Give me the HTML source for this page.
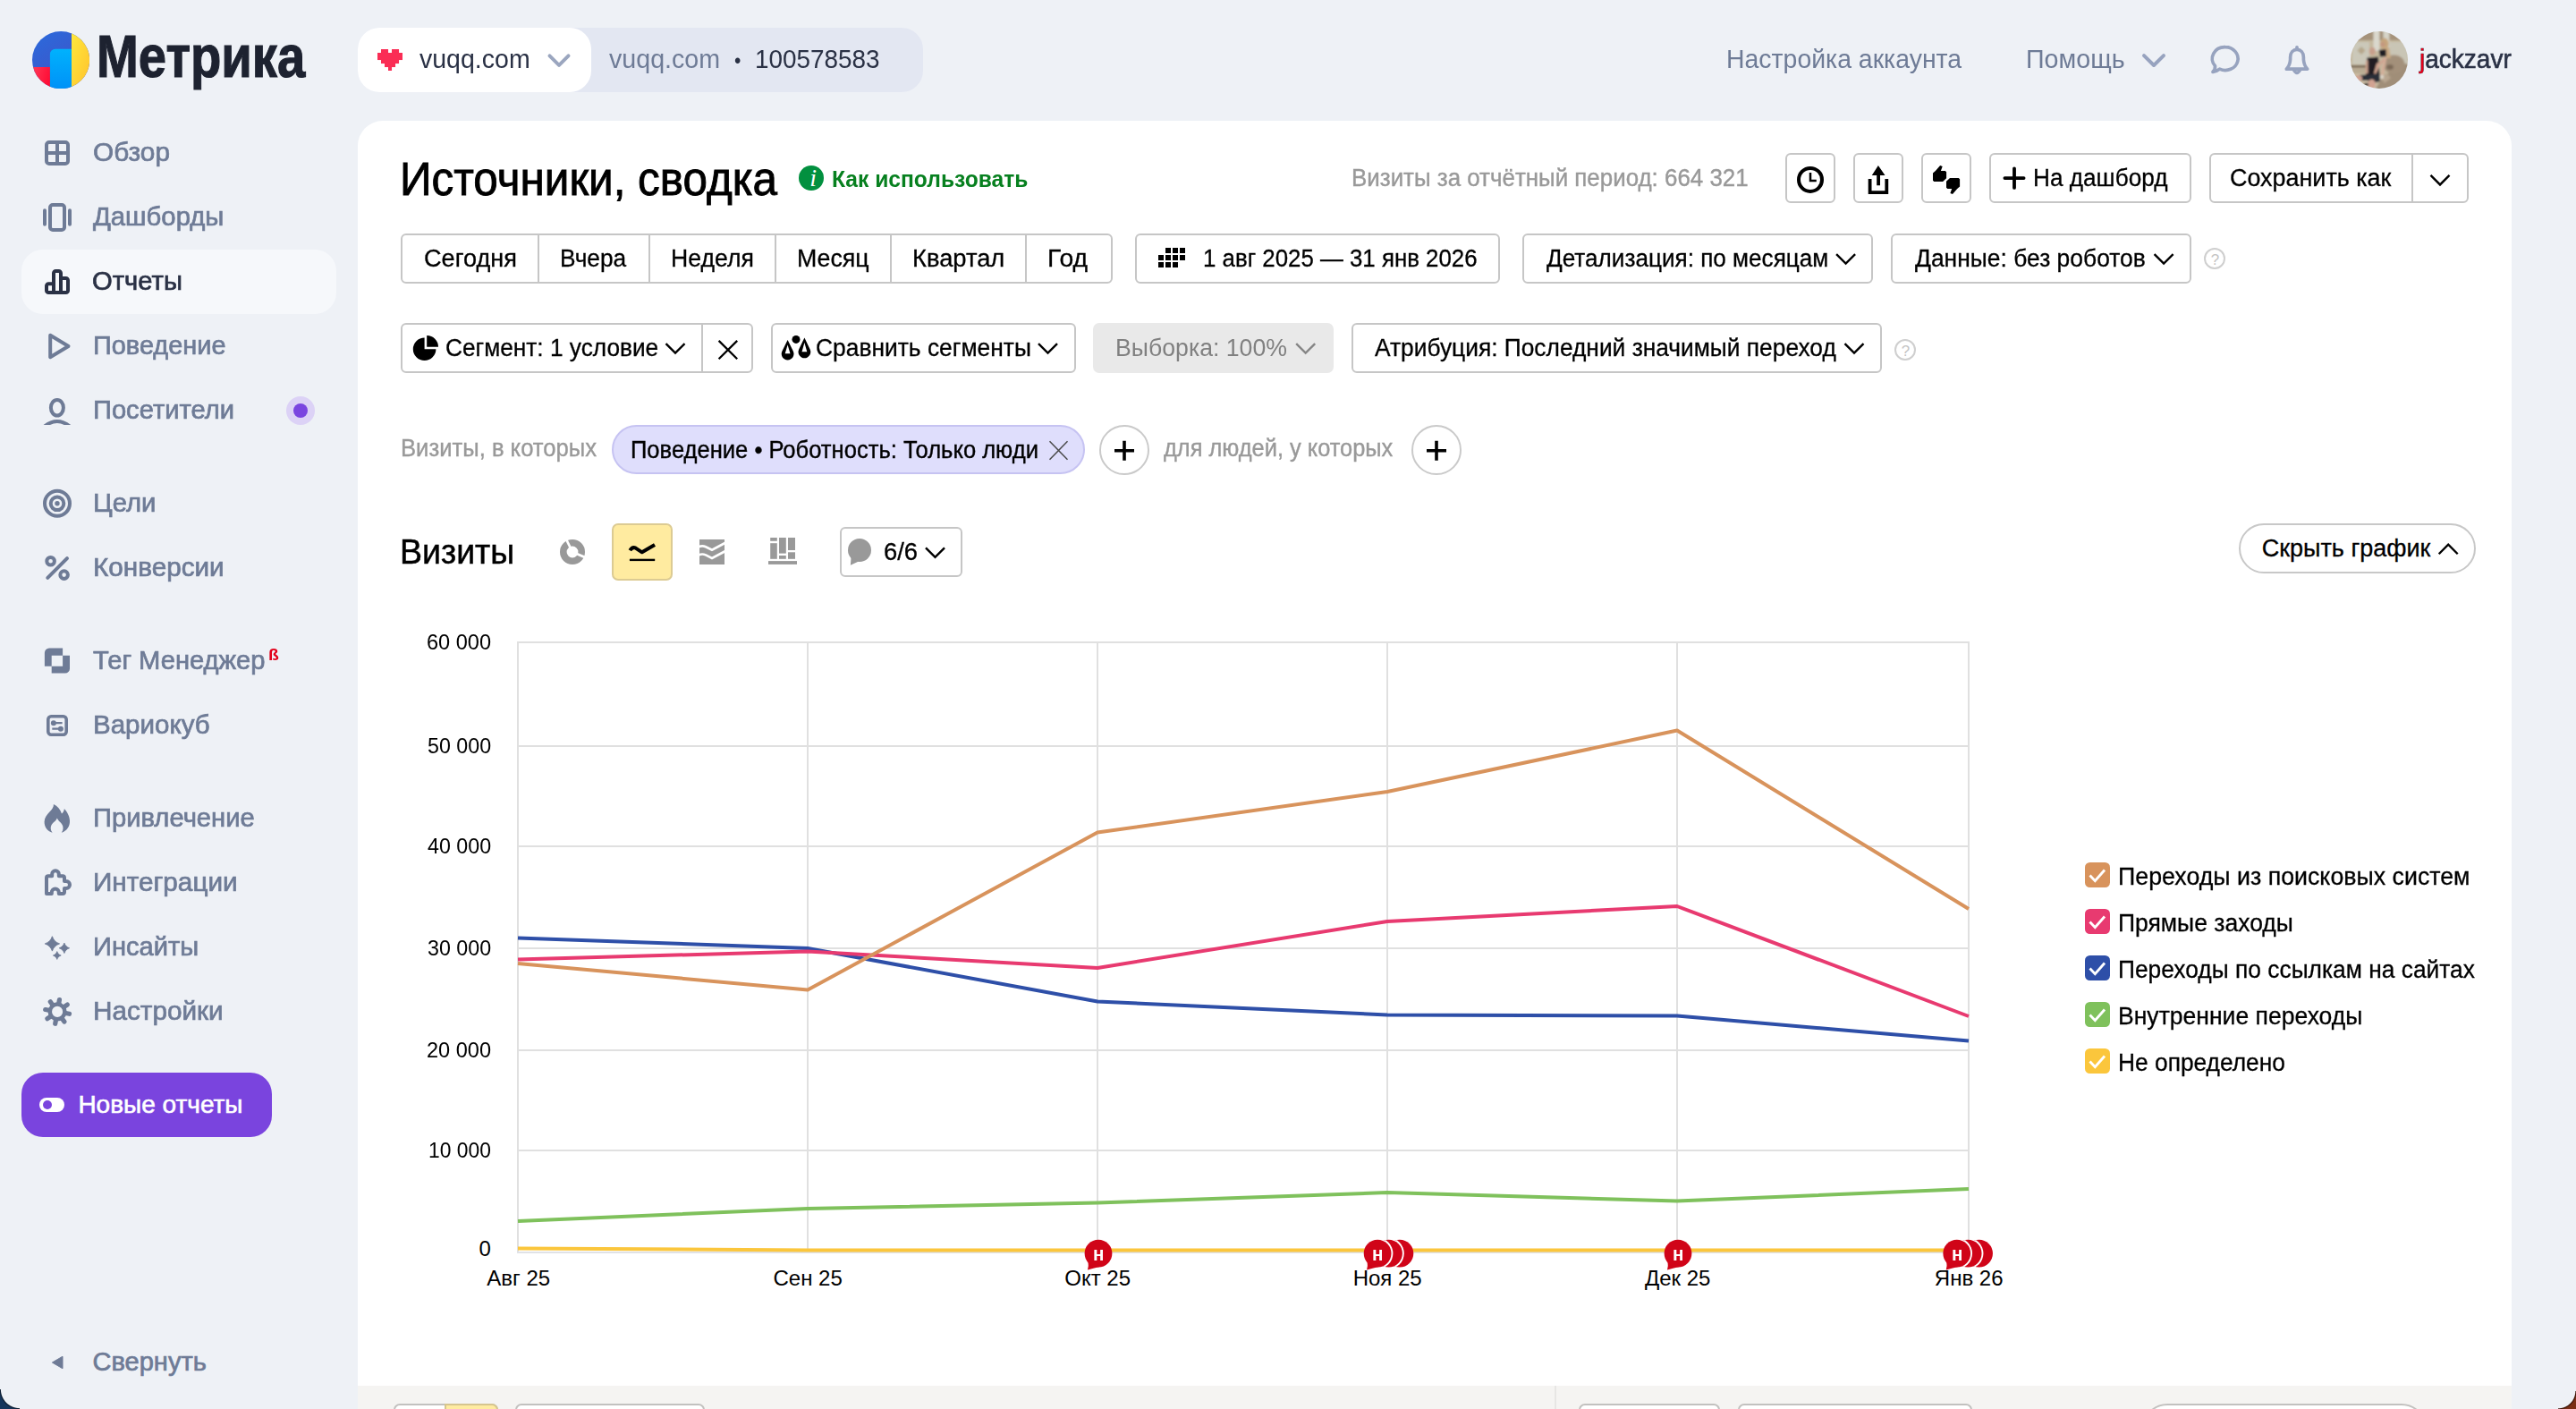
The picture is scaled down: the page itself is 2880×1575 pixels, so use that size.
<!DOCTYPE html>
<html lang="ru"><head><meta charset="utf-8"><title>Источники, сводка — Яндекс Метрика</title>
<style>
*{box-sizing:border-box;margin:0;padding:0}
html{width:100%;height:100%;overflow:hidden;background:#eef1f6}
body{position:absolute;left:0;top:0;width:2880px;height:1575px;overflow:hidden;background:#eef1f6;transform-origin:0 0;font-family:"Liberation Sans",sans-serif;-webkit-font-smoothing:antialiased}
.a{position:absolute;display:block}
.t{position:absolute;white-space:nowrap;transform-origin:0 50%;font-kerning:normal}
</style></head>
<body>
<div class="a" style="left:0;top:1553px;width:22px;height:22px;z-index:50;background:radial-gradient(circle at 100% 0%, rgba(0,0,0,0) 20.6px, #0b1b2e 21.6px, #16365c 23px)"></div>
<div class="a" style="left:2860px;top:1555px;width:20px;height:20px;z-index:50;background:radial-gradient(circle at 0% 0%, rgba(0,0,0,0) 18.8px, #3a1408 19.8px, #7a2e14 21.2px)"></div>
<svg class="a" style="left:36px;top:34.9px;z-index:3;" width="64.2" height="64.2" viewBox="0 0 64.2 64.2">
<defs>
<clipPath id="lc"><circle cx="32.1" cy="32.1" r="32.1"/></clipPath>
<linearGradient id="lg1" x1="0.1" y1="0" x2="0.75" y2="0.9"><stop offset="0" stop-color="#2b6adc"/><stop offset="1" stop-color="#4250c4"/></linearGradient>
<linearGradient id="lg2" x1="0" y1="0" x2="1" y2="1"><stop offset="0" stop-color="#ffe83c"/><stop offset="1" stop-color="#ffc12c"/></linearGradient>
<linearGradient id="lg3" x1="0" y1="0" x2="0" y2="1"><stop offset="0" stop-color="#00b2fd"/><stop offset="1" stop-color="#0091f7"/></linearGradient>
<linearGradient id="lg4" x1="0" y1="0" x2="1" y2="0.3"><stop offset="0" stop-color="#ff3a58"/><stop offset="1" stop-color="#ff0d35"/></linearGradient>
</defs>
<g clip-path="url(#lc)">
<rect width="65" height="65" fill="url(#lg1)"/>
<rect x="0" y="40" width="21" height="25" fill="url(#lg4)"/>
<path d="M19.9 65V25.5a5.8 5.8 0 0 1 5.8-5.8H44.1V65z" fill="url(#lg3)"/>
<rect x="44" y="0" width="21" height="65" fill="url(#lg2)"/>
</g></svg>
<div class="a" style="left:400px;top:31px;width:631.5px;height:72px;background:#e3e7f2;border-radius:24px;z-index:1;"></div>
<div class="a" style="left:400px;top:31px;width:261px;height:72px;background:#fff;border-radius:24px;z-index:2;"></div>
<svg class="a" style="left:422px;top:55px;z-index:3;" width="28" height="24" viewBox="0 0 28 24"><g fill="#fa2d55"><rect x="4" y="0" width="4.05" height="4.05"/><rect x="8" y="0" width="4.05" height="4.05"/><rect x="16" y="0" width="4.05" height="4.05"/><rect x="20" y="0" width="4.05" height="4.05"/><rect x="0" y="4" width="4.05" height="4.05"/><rect x="4" y="4" width="4.05" height="4.05"/><rect x="8" y="4" width="4.05" height="4.05"/><rect x="12" y="4" width="4.05" height="4.05"/><rect x="16" y="4" width="4.05" height="4.05"/><rect x="20" y="4" width="4.05" height="4.05"/><rect x="24" y="4" width="4.05" height="4.05"/><rect x="0" y="8" width="4.05" height="4.05"/><rect x="4" y="8" width="4.05" height="4.05"/><rect x="8" y="8" width="4.05" height="4.05"/><rect x="12" y="8" width="4.05" height="4.05"/><rect x="16" y="8" width="4.05" height="4.05"/><rect x="20" y="8" width="4.05" height="4.05"/><rect x="24" y="8" width="4.05" height="4.05"/><rect x="4" y="12" width="4.05" height="4.05"/><rect x="8" y="12" width="4.05" height="4.05"/><rect x="12" y="12" width="4.05" height="4.05"/><rect x="16" y="12" width="4.05" height="4.05"/><rect x="20" y="12" width="4.05" height="4.05"/><rect x="8" y="16" width="4.05" height="4.05"/><rect x="12" y="16" width="4.05" height="4.05"/><rect x="16" y="16" width="4.05" height="4.05"/><rect x="12" y="20" width="4.05" height="4.05"/></g></svg>
<svg class="a" style="left:0;top:0;z-index:4" width="2880" height="1575"><polyline points="614.5,62.4 625,72.8 635.5,62.4" fill="none" stroke="#9ba6bf" stroke-width="4" stroke-linecap="round" stroke-linejoin="round"/></svg>
<svg class="a" style="left:0;top:0;z-index:4" width="2880" height="1575"><polyline points="2397,62.1 2408,73 2419,62.1" fill="none" stroke="#97a3bf" stroke-width="4" stroke-linecap="round" stroke-linejoin="round"/><path d="M2488 52.7a14.1 12.9 0 1 1 -6.4 24.4c-2.2 1.9 -4.9 2.9 -7.6 3.3c1.9 -1.9 2.7 -4.2 2.5 -6.6a14.1 12.9 0 0 1 11.5 -21.1z" fill="none" stroke="#97a3bf" stroke-width="3.7" stroke-linecap="round" stroke-linejoin="round"/><path d="M2556.3 77.2Q2560.2 73 2560.6 66.5V64C2560.6 58.6 2563.8 55.3 2568 55.3C2572.2 55.3 2575.4 58.6 2575.4 64V66.5Q2575.8 73 2579.7 77.2Z" fill="none" stroke="#97a3bf" stroke-width="3.7" stroke-linecap="round" stroke-linejoin="round"/><path d="M2568 52.8V55M2564.5 78.2Q2568 84.6 2571.5 78.2" fill="none" stroke="#97a3bf" stroke-width="3.7" stroke-linecap="round" stroke-linejoin="round"/></svg>
<svg class="a" style="left:2628px;top:35px;z-index:3;" width="64" height="64" viewBox="0 0 64 64">
<defs><clipPath id="ac"><circle cx="32" cy="32" r="32"/></clipPath>
<filter id="ab" x="-10%" y="-10%" width="120%" height="120%"><feGaussianBlur stdDeviation="1.1"/></filter></defs>
<g clip-path="url(#ac)"><g filter="url(#ab)">
<rect x="-2" y="-2" width="68" height="68" fill="#c5b89e"/>
<rect x="-2" y="-2" width="68" height="12" fill="#a5927a"/>
<rect x="2" y="12" width="19" height="25" fill="#cbc8b9"/>
<rect x="40" y="12" width="24" height="26" fill="#c9c5b5"/>
<rect x="25.5" y="-2" width="6.8" height="24" fill="#dad8cd"/>
<rect x="36.5" y="-2" width="6.8" height="20" fill="#d6d4c8"/>
<path d="M12 17l4.5 4.5l-4.5 4.5l-4.5-4.5z" fill="#b5a78c"/>
<rect x="-2" y="38" width="20" height="2.6" fill="#6f5e4b"/>
<rect x="-2" y="40.6" width="22" height="7" fill="#b9ab93"/>
<rect x="-2" y="47" width="30" height="20" fill="#cbbca3"/>
<path d="M27 66L34 54L42 47L47 41L62 36L70 40V70H27z" fill="#a08e78"/>
<ellipse cx="48.5" cy="37" rx="12" ry="10.5" fill="#a3907a"/>
<ellipse cx="44" cy="40" rx="4" ry="3" fill="#7d6b58"/>
<path d="M33 50L40 47L45 52L38 58z" fill="#b8a690"/>
<ellipse cx="38" cy="14" rx="4.6" ry="6.5" fill="#c6a57c"/>
<path d="M36 18l7 0l2 12l-5 0z" fill="#c9aa84"/>
<circle cx="35.8" cy="14.5" r="2.6" fill="#c4977f"/>
<path d="M31.5 21L39.5 20L40 28L33 28.5z" fill="#1d1b21"/>
<path d="M37 29L40.5 29L36.5 50L33.5 50z" fill="#d3ad98"/>
<rect x="33" y="49" width="4" height="4" fill="#d9d2c4"/>
<path d="M18.5 29.5L31 28.5L32.5 49L17 49.5z" fill="#201d23"/>
<ellipse cx="24.2" cy="22.2" rx="3.5" ry="4.3" fill="#c79f8b"/>
<path d="M17 33L19.5 32L19.5 47L16.5 47z" fill="#cda18d"/>
<path d="M29 36L33 34L37 30L38 32L33 38L28 48L26 47z" fill="#cfa38f"/>
<path d="M10 49L32.5 47.5L33 56L24 58L19 55L11 55z" fill="#2a2e37"/>
<ellipse cx="23.6" cy="59" rx="4.2" ry="5.5" fill="#d2a392"/>
<ellipse cx="9" cy="52.5" rx="4" ry="3.2" fill="#d0a292"/>
<rect x="15" y="58" width="5" height="3" fill="#23242b"/>
</g></g></svg>
<div class="a" style="left:24px;top:279px;width:352px;height:72px;background:#f6f8fb;border-radius:24px;z-index:1;"></div>
<div class="a" style="left:320px;top:443px;width:32px;height:32px;background:#dcd2f6;border-radius:16px;z-index:1;"></div>
<div class="a" style="left:328px;top:451px;width:16px;height:16px;background:#7a45e0;border-radius:8px;z-index:2;"></div>
<div class="a" style="left:24px;top:1199px;width:280px;height:72px;background:#7a44de;border-radius:24px;z-index:1;"></div>
<div class="a" style="left:44px;top:1226.8px;width:28.2px;height:16.2px;background:#fff;border-radius:8.1px;z-index:2;"></div>
<div class="a" style="left:47.8px;top:1229.7px;width:10.4px;height:10.4px;background:#7a44de;border-radius:5.2px;z-index:3;"></div>
<svg class="a" style="left:54px;top:1512px;z-index:3;" width="20" height="22" viewBox="0 0 20 22"><path d="M16 4.2v13.6l-11.6 -6.8z" fill="#6e7b96" stroke="#6e7b96" stroke-width="1" stroke-linejoin="round"/></svg>
<svg class="a" style="left:0;top:0;z-index:4" width="2880" height="1575"><rect x="52" y="159" width="24" height="24" rx="3" fill="none" stroke="#6e7b96" stroke-width="4" stroke-linejoin="round" stroke-linecap="round"/><path d="M64 159V183M52 171H76" fill="none" stroke="#6e7b96" stroke-width="4" stroke-linejoin="round" stroke-linecap="round"/><rect x="56" y="229" width="16" height="28" rx="3" fill="none" stroke="#6e7b96" stroke-width="4" stroke-linejoin="round" stroke-linecap="round"/><path d="M50 235.2V250.8M78 235.2V250.8" fill="none" stroke="#6e7b96" stroke-width="4" stroke-linejoin="round" stroke-linecap="round"/><path d="M54.3 317.2H60V305.3a2.3 2.3 0 0 1 2.3-2.3h3.4a2.3 2.3 0 0 1 2.3 2.3V311h5.7a2.3 2.3 0 0 1 2.3 2.3v11.4a2.3 2.3 0 0 1-2.3 2.3H54.3a2.3 2.3 0 0 1-2.3-2.3v-5.2a2.3 2.3 0 0 1 2.3-2.3zM60 317.2V327M68 311V327" fill="none" stroke="#2a3145" stroke-width="4" stroke-linejoin="round" stroke-linecap="round"/><path d="M56.2 374.8L76.5 387L56.2 399.2z" fill="none" stroke="#6e7b96" stroke-width="4" stroke-linejoin="round" stroke-linecap="round"/><ellipse cx="63.9" cy="455.7" rx="7" ry="8.8" fill="none" stroke="#6e7b96" stroke-width="4" stroke-linejoin="round" stroke-linecap="round"/><clipPath id="cpu"><rect x="40" y="460" width="50" height="15"/></clipPath><path d="M49.8 476.5Q63.9 465.6 78 476.5" fill="none" stroke="#6e7b96" stroke-width="4" stroke-linejoin="round" stroke-linecap="round" clip-path="url(#cpu)"/><circle cx="64" cy="562.8" r="14" fill="none" stroke="#6e7b96" stroke-width="4" stroke-linejoin="round" stroke-linecap="round"/><circle cx="64" cy="562.8" r="7.3" fill="none" stroke="#6e7b96" stroke-width="4" stroke-linejoin="round" stroke-linecap="round"/><circle cx="64" cy="562.8" r="2.7" fill="#6e7b96"/><circle cx="56.6" cy="627.3" r="4.3" fill="none" stroke="#6e7b96" stroke-width="4" stroke-linejoin="round" stroke-linecap="round"/><circle cx="71.6" cy="642.6" r="4.3" fill="none" stroke="#6e7b96" stroke-width="4" stroke-linejoin="round" stroke-linecap="round"/><path d="M75 624.2L53.3 645.8" fill="none" stroke="#6e7b96" stroke-width="4" stroke-linejoin="round" stroke-linecap="round"/><path fill-rule="evenodd" fill="#6e7b96" d="M49.9 729.8a5.2 5.2 0 0 1 5.2-5.2H70.1V744.8H49.9zM57.7 732.7H78V747.4a5.2 5.2 0 0 1-5.2 5.2H57.7z"/><rect x="53.8" y="800.8" width="20.4" height="20.4" rx="3.4" fill="none" stroke="#6e7b96" stroke-width="3.6" stroke-linejoin="round"/><circle cx="59.9" cy="808.2" r="3" fill="#6e7b96"/><circle cx="67.9" cy="814.7" r="3" fill="#6e7b96"/><path d="M59.9 808.2H69.6M58.3 814.7H67.9" fill="none" stroke="#6e7b96" stroke-width="2.3"/><path fill="#6e7b96" d="M59.9 899C60.8 905.5 50 909.5 49.6 918.5C49.4 924.2 53 929.2 58.6 930.8C56.4 928.2 56.2 925 57.5 922.3C59.2 919 62.6 918.2 63.8 914.5C64.9 917.3 67.2 918.6 69 921C71.2 924 71 927.8 68.8 930.8C74.6 929 78.3 924 78 917.3C77.8 911.6 74.6 907 71.9 904C71.6 906.4 70.6 908.2 69 909.4C67.6 905 64.2 901 59.9 899Z"/><path d="M52 999V981.2a2 2 0 0 1 2-2H58.2V977a3.8 3.8 0 0 1 7.6 0V979.2H70a2 2 0 0 1 2 2V985H74a4 4 0 0 1 0 8H72V997a2 2 0 0 1-2 2H65.8V997.5a4 4 0 0 0-8 0V999H54a2 2 0 0 1-2-2z" fill="none" stroke="#6e7b96" stroke-width="4" stroke-linejoin="round" stroke-linecap="round"/><path fill="#6e7b96" stroke="#6e7b96" stroke-width="0.8" stroke-linejoin="round" d="M58.4 1046.7C59.876 1050.9640000000002 62.336 1053.424 66.6 1054.9C62.336 1056.3760000000002 59.876 1058.836 58.4 1063.1000000000001C56.924 1058.836 54.464 1056.3760000000002 50.2 1054.9C54.464 1053.424 56.924 1050.9640000000002 58.4 1046.7ZM71.9 1054.1C72.926 1057.0639999999999 74.63600000000001 1058.774 77.60000000000001 1059.8C74.63600000000001 1060.826 72.926 1062.536 71.9 1065.5C70.87400000000001 1062.536 69.164 1060.826 66.2 1059.8C69.164 1058.774 70.87400000000001 1057.0639999999999 71.9 1054.1ZM63.8 1063.6C64.592 1065.888 65.91199999999999 1067.208 68.2 1068C65.91199999999999 1068.792 64.592 1070.112 63.8 1072.4C63.007999999999996 1070.112 61.687999999999995 1068.792 59.4 1068C61.687999999999995 1067.208 63.007999999999996 1065.888 63.8 1063.6Z"/><circle cx="64.1" cy="1130.9" r="8.3" fill="none" stroke="#6e7b96" stroke-width="4.5"/><path d="M65.75 1121.54L66.46 1117.51M71.88 1125.45L75.24 1123.10M73.46 1132.55L77.49 1133.26M69.55 1138.68L71.90 1142.04M62.45 1140.26L61.74 1144.29M56.32 1136.35L52.96 1138.70M54.74 1129.25L50.71 1128.54M58.65 1123.12L56.30 1119.76" fill="none" stroke="#6e7b96" stroke-width="5.2" stroke-linecap="round"/></svg>
<svg class="a" style="left:0;top:0;z-index:4" width="2880" height="1575"><circle cx="2024" cy="200.9" r="13" fill="none" stroke="#000" stroke-width="4"/><path d="M2024 193V202H2030.8" fill="none" stroke="#000" stroke-width="2.5"/><path d="M2099.9 185L2107.5 196H2102V207.3H2098.2V196H2092.8z" fill="#000"/><path d="M2090.6 200V215.1H2109.3V200" fill="none" stroke="#000" stroke-width="3.8"/><polygon fill="#000" points="2161.00,193.50 2163.90,190.90 2169.10,184.90 2171.70,185.90 2169.90,190.90 2174.80,190.90 2176.10,192.20 2176.10,199.20 2172.10,203.00 2162.30,203.00 2161.00,201.70"/><polygon fill="#000" points="2191.10,208.40 2188.20,211.00 2183.00,217.00 2180.40,216.00 2182.20,211.00 2177.30,211.00 2176.00,209.70 2176.00,202.70 2180.00,198.90 2189.80,198.90 2191.10,200.20"/><path d="M2241.4 199.1H2262.6M2252 188.3V209.9" fill="none" stroke="#000" stroke-width="3.8" stroke-linecap="round"/><rect x="1303" y="277" width="6" height="6" fill="#000"/><rect x="1311" y="277" width="6" height="6" fill="#000"/><rect x="1319" y="277" width="6" height="6" fill="#000"/><rect x="1295" y="285" width="6" height="6" fill="#000"/><rect x="1303" y="285" width="6" height="6" fill="#000"/><rect x="1311" y="285" width="6" height="6" fill="#000"/><rect x="1319" y="285" width="6" height="6" fill="#000"/><rect x="1295" y="293" width="6" height="6" fill="#000"/><rect x="1303" y="293" width="6" height="6" fill="#000"/><rect x="1311" y="293" width="6" height="6" fill="#000"/><path d="M474.6 390.3V377.5A12.8 12.8 0 1 0 487.4 390.3Z" fill="#000"/><path d="M477.2 387.8V375A12.8 12.8 0 0 1 490 387.8Z" fill="#000"/><path d="M803.6 380.9L824.2 401.3M824.2 380.9L803.6 401.3" fill="none" stroke="#000" stroke-width="2.3"/><path fill-rule="evenodd" fill="#000" d="M880.6 380L886.78 392.43A6.9 6.9 0 1 1 874.42 392.43ZM880.6 385.6L883.5 395.3H877.7Z"/><path fill-rule="evenodd" fill="#000" d="M899.4 377.4L905.63 390.42A6.9 6.9 0 1 1 893.17 390.42ZM899.4 383.0L902.3 393.20000000000005H896.5Z"/><circle cx="890" cy="379.4" r="4.5" fill="#000"/><circle cx="640" cy="617" r="10.2" fill="none" stroke="#999" stroke-width="7.6"/><path d="M640 617L632.6 602M640 617L655.5 623.6" fill="none" stroke="#fff" stroke-width="2.8"/><path d="M704.3 615.3C706 612.5 708.3 611.4 710.6 612.6L717.8 617.3L732 609" fill="none" stroke="#000" stroke-width="4" stroke-linejoin="round"/><path d="M703.9 625.9H732.2" stroke="#000" stroke-width="2.4"/><rect x="782" y="603" width="28" height="28" fill="#999"/><path d="M781 611.4C784 609.8 786.5 610 789 611.2L796 614.8L811 606.8M781 620.6C784 619 786.5 619.2 789 620.4L796 624L811 616" fill="none" stroke="#fff" stroke-width="2.7"/><g fill="#999"><rect x="859" y="627.1" width="32" height="3.8"/><rect x="861.2" y="601" width="7.6" height="3.8"/><rect x="861.2" y="607.2" width="7.6" height="17.6"/><rect x="871" y="601" width="7.8" height="17.6"/><rect x="871" y="621" width="7.8" height="3.8"/><rect x="881" y="601" width="8" height="14"/><rect x="881" y="617.3" width="8" height="7.5"/></g><circle cx="961" cy="615" r="13" fill="#999"/><path d="M951.6 622L950.9 631.8L960 627.5z" fill="#999"/></svg>
<div class="a" style="left:400px;top:135px;width:2408px;height:1460px;background:#fff;border-radius:28px 28px 0 0;z-index:0;"></div>
<div class="a" style="left:400px;top:1549px;width:2408px;height:40px;background:#f5f4f2;z-index:1;"></div>
<div class="a" style="left:893px;top:184.9px;width:28px;height:28px;background:#02903f;border-radius:14px;z-index:1;"></div>
<div class="a" style="left:1996px;top:171px;width:56px;height:56px;background:#fff;border:2px solid #c6c6c6;border-radius:6px;z-index:1;"></div>
<div class="a" style="left:2072px;top:171px;width:56px;height:56px;background:#fff;border:2px solid #c6c6c6;border-radius:6px;z-index:1;"></div>
<div class="a" style="left:2148px;top:171px;width:56px;height:56px;background:#fff;border:2px solid #c6c6c6;border-radius:6px;z-index:1;"></div>
<div class="a" style="left:2224px;top:171px;width:226px;height:56px;background:#fff;border:2px solid #c6c6c6;border-radius:6px;z-index:1;"></div>
<div class="a" style="left:2470px;top:171px;width:290px;height:56px;background:#fff;border:2px solid #c6c6c6;border-radius:6px;z-index:1;"></div>
<div class="a" style="left:2696px;top:172px;width:2px;height:54px;background:#c6c6c6;z-index:2;"></div>
<svg class="a" style="left:0;top:0;z-index:4" width="2880" height="1575"><polyline points="2717.50,195.95 2728.00,206.45 2738.50,195.95" fill="none" stroke="#000" stroke-width="2.4"/></svg>
<div class="a" style="left:448px;top:261px;width:796px;height:56px;background:#fff;border:2px solid #c6c6c6;border-radius:6px;z-index:1;"></div>
<div class="a" style="left:601px;top:262px;width:2px;height:54px;background:#c6c6c6;z-index:2;"></div>
<div class="a" style="left:724.75px;top:262px;width:2px;height:54px;background:#c6c6c6;z-index:2;"></div>
<div class="a" style="left:865.75px;top:262px;width:2px;height:54px;background:#c6c6c6;z-index:2;"></div>
<div class="a" style="left:995.25px;top:262px;width:2px;height:54px;background:#c6c6c6;z-index:2;"></div>
<div class="a" style="left:1145.75px;top:262px;width:2px;height:54px;background:#c6c6c6;z-index:2;"></div>
<div class="a" style="left:1269px;top:261px;width:407.5px;height:56px;background:#fff;border:2px solid #c6c6c6;border-radius:6px;z-index:1;"></div>
<div class="a" style="left:1702px;top:261px;width:392px;height:56px;background:#fff;border:2px solid #c6c6c6;border-radius:6px;z-index:1;"></div>
<svg class="a" style="left:0;top:0;z-index:4" width="2880" height="1575"><polyline points="2053.10,284.15 2063.60,294.65 2074.10,284.15" fill="none" stroke="#000" stroke-width="2.4"/></svg>
<div class="a" style="left:2114px;top:261px;width:336px;height:56px;background:#fff;border:2px solid #c6c6c6;border-radius:6px;z-index:1;"></div>
<svg class="a" style="left:0;top:0;z-index:4" width="2880" height="1575"><polyline points="2408.60,284.15 2419.10,294.65 2429.60,284.15" fill="none" stroke="#000" stroke-width="2.4"/></svg>
<div class="a" style="left:2464px;top:277px;width:24px;height:24px;background:transparent;border:2px solid #cfcfcf;border-radius:12px;z-index:1;"></div>
<div class="a" style="left:448px;top:361px;width:394px;height:56px;background:#fff;border:2px solid #c6c6c6;border-radius:6px;z-index:1;"></div>
<div class="a" style="left:784px;top:362px;width:2px;height:54px;background:#c6c6c6;z-index:2;"></div>
<svg class="a" style="left:0;top:0;z-index:4" width="2880" height="1575"><polyline points="744.50,384.15 755.00,394.65 765.50,384.15" fill="none" stroke="#000" stroke-width="2.4"/></svg>
<div class="a" style="left:862px;top:361px;width:341px;height:56px;background:#fff;border:2px solid #c6c6c6;border-radius:6px;z-index:1;"></div>
<svg class="a" style="left:0;top:0;z-index:4" width="2880" height="1575"><polyline points="1161.00,384.15 1171.50,394.65 1182.00,384.15" fill="none" stroke="#000" stroke-width="2.4"/></svg>
<div class="a" style="left:1222px;top:361px;width:269px;height:56px;background:#e9e9e9;border-radius:7px;z-index:1;"></div>
<svg class="a" style="left:0;top:0;z-index:4" width="2880" height="1575"><polyline points="1449.20,384.15 1459.70,394.65 1470.20,384.15" fill="none" stroke="#858585" stroke-width="2.4"/></svg>
<div class="a" style="left:1511px;top:361px;width:593px;height:56px;background:#fff;border:2px solid #c6c6c6;border-radius:6px;z-index:1;"></div>
<svg class="a" style="left:0;top:0;z-index:4" width="2880" height="1575"><polyline points="2062.50,384.15 2073.00,394.65 2083.50,384.15" fill="none" stroke="#000" stroke-width="2.4"/></svg>
<div class="a" style="left:2118px;top:379px;width:24px;height:24px;background:transparent;border:2px solid #cfcfcf;border-radius:12px;z-index:1;"></div>
<div class="a" style="left:684px;top:474.5px;width:529px;height:55px;background:#dfdefc;border:2px solid #c6c3f2;border-radius:28px;z-index:1;"></div>
<svg class="a" style="left:1170px;top:490px;z-index:4" width="28" height="28"><path d="M3.5 3.2l20 20.6M23.5 3.2l-20 20.6" stroke="#4a4a4a" stroke-width="1.5" fill="none"/></svg>
<div class="a" style="left:1229px;top:475px;width:56px;height:56px;background:#fff;border:2px solid #cacaca;border-radius:28px;z-index:1;"></div>
<svg class="a" style="left:1229px;top:475px;z-index:4" width="56" height="56"><path d="M17 28.7h22M28 17.7v22" stroke="#000" stroke-width="3.6" fill="none"/></svg>
<div class="a" style="left:1578px;top:475px;width:56px;height:56px;background:#fff;border:2px solid #cacaca;border-radius:28px;z-index:1;"></div>
<svg class="a" style="left:1578px;top:475px;z-index:4" width="56" height="56"><path d="M17 28.7h22M28 17.7v22" stroke="#000" stroke-width="3.6" fill="none"/></svg>
<div class="a" style="left:684px;top:585px;width:68px;height:64px;background:#ffeba0;border:2px solid #dccb93;border-radius:7px;z-index:1;"></div>
<div class="a" style="left:939px;top:589px;width:137px;height:56px;background:#fff;border:2px solid #c6c6c6;border-radius:6px;z-index:1;"></div>
<svg class="a" style="left:0;top:0;z-index:4" width="2880" height="1575"><polyline points="1035.00,612.35 1045.50,622.85 1056.00,612.35" fill="none" stroke="#000" stroke-width="2.4"/></svg>
<div class="a" style="left:2503px;top:585px;width:265px;height:56px;background:#fff;border:2px solid #c8c8c8;border-radius:28px;z-index:1;"></div>
<svg class="a" style="left:0;top:0;z-index:4" width="2880" height="1575"><polyline points="2726.70,619.25 2737.20,608.75 2747.70,619.25" fill="none" stroke="#000" stroke-width="2.4"/></svg>
<svg class="a" style="left:0;top:0;z-index:2" width="2880" height="1575"><line x1="579" y1="718.00" x2="2201" y2="718.00" stroke="#e0e0e0" stroke-width="2"/><line x1="579" y1="834.00" x2="2201" y2="834.00" stroke="#e0e0e0" stroke-width="2"/><line x1="579" y1="946.00" x2="2201" y2="946.00" stroke="#e0e0e0" stroke-width="2"/><line x1="579" y1="1060.00" x2="2201" y2="1060.00" stroke="#e0e0e0" stroke-width="2"/><line x1="579" y1="1174.00" x2="2201" y2="1174.00" stroke="#e0e0e0" stroke-width="2"/><line x1="579" y1="1286.00" x2="2201" y2="1286.00" stroke="#e0e0e0" stroke-width="2"/><line x1="579" y1="717.0" x2="579" y2="1401.0" stroke="#e0e0e0" stroke-width="2"/><line x1="903" y1="717.0" x2="903" y2="1401.0" stroke="#e0e0e0" stroke-width="2"/><line x1="1227" y1="717.0" x2="1227" y2="1401.0" stroke="#e0e0e0" stroke-width="2"/><line x1="1551" y1="717.0" x2="1551" y2="1401.0" stroke="#e0e0e0" stroke-width="2"/><line x1="1875" y1="717.0" x2="1875" y2="1401.0" stroke="#e0e0e0" stroke-width="2"/><line x1="2201" y1="717.0" x2="2201" y2="1401.0" stroke="#e0e0e0" stroke-width="2"/><line x1="578" y1="1400.0" x2="2202" y2="1400.0" stroke="#e0e2e7" stroke-width="2"/><polyline points="579,1395.4 903,1397.4 1227,1397.6 1551,1397.6 1875,1397.6 2201,1397.6" fill="none" stroke="#fbc63c" stroke-width="4" stroke-linejoin="round"/><polyline points="579,1365 903,1351 1227,1344.5 1551,1333 1875,1342.5 2201,1329" fill="none" stroke="#7fc15c" stroke-width="4" stroke-linejoin="round"/><polyline points="579,1048.5 903,1060 1227,1119.5 1551,1134.5 1875,1135.5 2201,1163.5" fill="none" stroke="#2e4fa8" stroke-width="4" stroke-linejoin="round"/><polyline points="579,1072.5 903,1063.5 1227,1082 1551,1030 1875,1013 2201,1136" fill="none" stroke="#e83a70" stroke-width="4" stroke-linejoin="round"/><polyline points="579,1077 903,1106.5 1227,930.5 1551,885 1875,816.5 2201,1016" fill="none" stroke="#d8935c" stroke-width="4" stroke-linejoin="round"/></svg>
<svg class="a" style="left:0;top:0;z-index:6" width="2880" height="1575"><path d="M1216.50 1410.60Q1217.40 1415.60 1216.00 1419.50Q1222.00 1417.70 1229.50 1415.90z" fill="#d00418"/><circle cx="1228" cy="1401.1" r="15.4" fill="#d00418"/></svg>
<svg class="a" style="left:0;top:0;z-index:6" width="2880" height="1575"><path d="M1864.50 1410.60Q1865.40 1415.60 1864.00 1419.50Q1870.00 1417.70 1877.50 1415.90z" fill="#d00418"/><circle cx="1876" cy="1401.1" r="15.4" fill="#d00418"/></svg>
<svg class="a" style="left:0;top:0;z-index:6" width="2880" height="1575"><circle cx="1564.8999999999999" cy="1401.1" r="15.4" fill="#d00418"/></svg>
<svg class="a" style="left:0;top:0;z-index:7" width="2880" height="1575"><clipPath id="mk1"><circle cx="1564.8999999999999" cy="1401.1" r="15.4"/></clipPath><circle cx="1552.5" cy="1401.1" r="17.3" fill="#fff" clip-path="url(#mk1)"/><circle cx="1552.5" cy="1401.1" r="15.4" fill="#d00418"/></svg>
<svg class="a" style="left:0;top:0;z-index:8" width="2880" height="1575"><clipPath id="mk2"><circle cx="1552.5" cy="1401.1" r="15.4"/></clipPath><circle cx="1540.1" cy="1401.1" r="17.3" fill="#fff" clip-path="url(#mk2)"/><path d="M1528.60 1410.60Q1529.50 1415.60 1528.10 1419.50Q1534.10 1417.70 1541.60 1415.90z" fill="#d00418"/><circle cx="1540.1" cy="1401.1" r="15.4" fill="#d00418"/></svg>
<svg class="a" style="left:0;top:0;z-index:6" width="2880" height="1575"><circle cx="2212.55" cy="1401.1" r="15.4" fill="#d00418"/></svg>
<svg class="a" style="left:0;top:0;z-index:7" width="2880" height="1575"><clipPath id="mk3"><circle cx="2212.55" cy="1401.1" r="15.4"/></clipPath><circle cx="2200.15" cy="1401.1" r="17.3" fill="#fff" clip-path="url(#mk3)"/><circle cx="2200.15" cy="1401.1" r="15.4" fill="#d00418"/></svg>
<svg class="a" style="left:0;top:0;z-index:8" width="2880" height="1575"><clipPath id="mk4"><circle cx="2200.15" cy="1401.1" r="15.4"/></clipPath><circle cx="2187.75" cy="1401.1" r="17.3" fill="#fff" clip-path="url(#mk4)"/><path d="M2176.25 1410.60Q2177.15 1415.60 2175.75 1419.50Q2181.75 1417.70 2189.25 1415.90z" fill="#d00418"/><circle cx="2187.75" cy="1401.1" r="15.4" fill="#d00418"/></svg>
<div class="a" style="left:2331px;top:964px;width:28px;height:28px;background:#d8935c;border-radius:5.5px;z-index:1;"></div>
<svg class="a" style="left:2331px;top:964px;z-index:3" width="28" height="28"><polyline points="5.5,14.5 11.3,20.7 22,8.5" fill="none" stroke="#fff" stroke-width="2.9" stroke-linejoin="miter"/></svg>
<div class="a" style="left:2331px;top:1016px;width:28px;height:28px;background:#e83a70;border-radius:5.5px;z-index:1;"></div>
<svg class="a" style="left:2331px;top:1016px;z-index:3" width="28" height="28"><polyline points="5.5,14.5 11.3,20.7 22,8.5" fill="none" stroke="#fff" stroke-width="2.9" stroke-linejoin="miter"/></svg>
<div class="a" style="left:2331px;top:1068px;width:28px;height:28px;background:#2e4fa8;border-radius:5.5px;z-index:1;"></div>
<svg class="a" style="left:2331px;top:1068px;z-index:3" width="28" height="28"><polyline points="5.5,14.5 11.3,20.7 22,8.5" fill="none" stroke="#fff" stroke-width="2.9" stroke-linejoin="miter"/></svg>
<div class="a" style="left:2331px;top:1120px;width:28px;height:28px;background:#7fc15c;border-radius:5.5px;z-index:1;"></div>
<svg class="a" style="left:2331px;top:1120px;z-index:3" width="28" height="28"><polyline points="5.5,14.5 11.3,20.7 22,8.5" fill="none" stroke="#fff" stroke-width="2.9" stroke-linejoin="miter"/></svg>
<div class="a" style="left:2331px;top:1172px;width:28px;height:28px;background:#fbc63c;border-radius:5.5px;z-index:1;"></div>
<svg class="a" style="left:2331px;top:1172px;z-index:3" width="28" height="28"><polyline points="5.5,14.5 11.3,20.7 22,8.5" fill="none" stroke="#fff" stroke-width="2.9" stroke-linejoin="miter"/></svg>
<div class="a" style="left:440px;top:1569px;width:117px;height:30px;background:#fff;border:2px solid #c2c1bf;border-radius:7px;z-index:2;"></div>
<div class="a" style="left:497px;top:1569px;width:60px;height:30px;background:#ffeba0;border:2px solid #d6c58e;border-radius:0 7px 0 0;z-index:3;"></div>
<div class="a" style="left:576px;top:1569px;width:212px;height:30px;background:#fff;border:2px solid #c2c1bf;border-radius:7px;z-index:2;"></div>
<div class="a" style="left:1738px;top:1549px;width:2px;height:40px;background:#e7e6e4;z-index:2;"></div>
<div class="a" style="left:1765px;top:1569px;width:158px;height:30px;background:#fff;border:2px solid #c2c1bf;border-radius:7px;z-index:2;"></div>
<div class="a" style="left:1943px;top:1569px;width:262px;height:30px;background:#fff;border:2px solid #c2c1bf;border-radius:7px;z-index:2;"></div>
<div class="a" style="left:2395px;top:1569px;width:318px;height:56px;background:#fff;border:2px solid #c2c1bf;border-radius:28px;z-index:2;"></div>
<div class="t" style="left:108.27px;top:29.00px;font-size:67.5px;line-height:67.5px;color:#1d2230;z-index:5;font-weight:700;transform:scaleX(0.8331);-webkit-text-stroke:1.2px #1d2230;paint-order:stroke fill;">Метрика</div>
<div class="t" style="left:468.75px;top:52.00px;font-size:29px;line-height:29px;color:#2a3145;z-index:5;transform:scaleX(0.9834);">vuqq.com</div>
<div class="t" style="left:680.75px;top:52.00px;font-size:29px;line-height:29px;color:#6e7b96;z-index:5;transform:scaleX(0.9874);">vuqq.com</div>
<div class="t" style="left:821.00px;top:56.00px;font-size:24px;line-height:24px;color:#2a3145;z-index:5;transform:scaleX(0.8750);">•</div>
<div class="t" style="left:843.58px;top:52.00px;font-size:29px;line-height:29px;color:#2a3145;z-index:5;transform:scaleX(0.9611);">100578583</div>
<div class="t" style="left:1929.64px;top:52.00px;font-size:29px;line-height:29px;color:#6e7b96;z-index:5;transform:scaleX(0.9804);">Настройка аккаунта</div>
<div class="t" style="left:2265.42px;top:52.00px;font-size:29px;line-height:29px;color:#6e7b96;z-index:5;transform:scaleX(0.9881);">Помощь</div>
<div class="t" style="left:2704.67px;top:52.00px;font-size:29px;line-height:29px;color:#2a3145;z-index:5;transform:scaleX(0.9656);-webkit-text-stroke:0.6px #2a3145;paint-order:stroke fill;"><span style="color:#e2001a">j</span>ackzavr</div>
<div class="t" style="left:103.72px;top:156.00px;font-size:29px;line-height:29px;color:#6e7b96;z-index:5;transform:scaleX(1.0260);-webkit-text-stroke:0.7px #6e7b96;paint-order:stroke fill;">Обзор</div>
<div class="t" style="left:104.00px;top:228.00px;font-size:29px;line-height:29px;color:#6e7b96;z-index:5;transform:scaleX(1.0094);-webkit-text-stroke:0.7px #6e7b96;paint-order:stroke fill;">Дашборды</div>
<div class="t" style="left:103.49px;top:300.00px;font-size:29px;line-height:29px;color:#2a3145;z-index:5;transform:scaleX(1.0062);-webkit-text-stroke:0.7px #2a3145;paint-order:stroke fill;">Отчеты</div>
<div class="t" style="left:103.61px;top:372.00px;font-size:29px;line-height:29px;color:#6e7b96;z-index:5;transform:scaleX(0.9972);-webkit-text-stroke:0.7px #6e7b96;paint-order:stroke fill;">Поведение</div>
<div class="t" style="left:103.59px;top:444.00px;font-size:29px;line-height:29px;color:#6e7b96;z-index:5;transform:scaleX(1.0041);-webkit-text-stroke:0.7px #6e7b96;paint-order:stroke fill;">Посетители</div>
<div class="t" style="left:103.58px;top:548.00px;font-size:29px;line-height:29px;color:#6e7b96;z-index:5;transform:scaleX(1.0084);-webkit-text-stroke:0.7px #6e7b96;paint-order:stroke fill;">Цели</div>
<div class="t" style="left:103.55px;top:620.00px;font-size:29px;line-height:29px;color:#6e7b96;z-index:5;transform:scaleX(1.0238);-webkit-text-stroke:0.7px #6e7b96;paint-order:stroke fill;">Конверсии</div>
<div class="t" style="left:104.30px;top:724.00px;font-size:29px;line-height:29px;color:#6e7b96;z-index:5;transform:scaleX(1.0052);-webkit-text-stroke:0.7px #6e7b96;paint-order:stroke fill;">Тег Менеджер</div>
<div class="t" style="left:103.56px;top:796.00px;font-size:29px;line-height:29px;color:#6e7b96;z-index:5;transform:scaleX(1.0178);-webkit-text-stroke:0.7px #6e7b96;paint-order:stroke fill;">Вариокуб</div>
<div class="t" style="left:103.59px;top:900.00px;font-size:29px;line-height:29px;color:#6e7b96;z-index:5;transform:scaleX(1.0065);-webkit-text-stroke:0.7px #6e7b96;paint-order:stroke fill;">Привлечение</div>
<div class="t" style="left:103.55px;top:972.00px;font-size:29px;line-height:29px;color:#6e7b96;z-index:5;transform:scaleX(1.0240);-webkit-text-stroke:0.7px #6e7b96;paint-order:stroke fill;">Интеграции</div>
<div class="t" style="left:103.59px;top:1044.00px;font-size:29px;line-height:29px;color:#6e7b96;z-index:5;transform:scaleX(1.0029);-webkit-text-stroke:0.7px #6e7b96;paint-order:stroke fill;">Инсайты</div>
<div class="t" style="left:103.55px;top:1116.00px;font-size:29px;line-height:29px;color:#6e7b96;z-index:5;transform:scaleX(1.0245);-webkit-text-stroke:0.7px #6e7b96;paint-order:stroke fill;">Настройки</div>
<div class="t" style="left:103.60px;top:1508.00px;font-size:29px;line-height:29px;color:#6e7b96;z-index:5;-webkit-text-stroke:0.7px #6e7b96;paint-order:stroke fill;">Свернуть</div>
<div class="t" style="left:299.58px;top:722.00px;font-size:19px;line-height:19px;color:#e2001a;z-index:5;font-weight:700;transform:scaleX(1.0182);">ß</div>
<div class="t" style="left:87.40px;top:1221.00px;font-size:28px;line-height:28px;color:#fff;z-index:5;-webkit-text-stroke:0.6px #fff;paint-order:stroke fill;">Новые отчеты</div>
<div class="t" style="left:447.42px;top:175.00px;font-size:51px;line-height:51px;color:#000;z-index:5;transform:scaleX(0.9692);-webkit-text-stroke:0.9px #000;paint-order:stroke fill;">Источники, сводка</div>
<div class="t" style="left:905.30px;top:185.00px;font-size:28px;line-height:28px;color:#fff;z-index:5;font-family:'Liberation Serif',serif;font-style:italic;">i</div>
<div class="t" style="left:930.02px;top:188.00px;font-size:25px;line-height:25px;color:#07801f;z-index:5;font-weight:700;transform:scaleX(0.9844);">Как использовать</div>
<div class="t" style="left:1510.83px;top:186.00px;font-size:27px;line-height:27px;color:#999;z-index:5;transform:scaleX(0.9595);-webkit-text-stroke:0.4px #999;paint-order:stroke fill;">Визиты за отчётный период: 664 321</div>
<div class="t" style="left:2272.81px;top:186.00px;font-size:27px;line-height:27px;color:#000;z-index:5;transform:scaleX(0.9702);-webkit-text-stroke:0.3px #000;paint-order:stroke fill;">На дашборд</div>
<div class="t" style="left:2493.00px;top:186.00px;font-size:27px;line-height:27px;color:#000;z-index:5;transform:scaleX(0.9967);-webkit-text-stroke:0.3px #000;paint-order:stroke fill;">Сохранить как</div>
<div class="t" style="left:473.50px;top:276.00px;font-size:27px;line-height:27px;color:#000;z-index:5;transform:scaleX(1.0039);-webkit-text-stroke:0.3px #000;paint-order:stroke fill;">Сегодня</div>
<div class="t" style="left:625.55px;top:276.00px;font-size:27px;line-height:27px;color:#000;z-index:5;transform:scaleX(0.9739);-webkit-text-stroke:0.3px #000;paint-order:stroke fill;">Вчера</div>
<div class="t" style="left:750.03px;top:276.00px;font-size:27px;line-height:27px;color:#000;z-index:5;transform:scaleX(0.9856);-webkit-text-stroke:0.3px #000;paint-order:stroke fill;">Неделя</div>
<div class="t" style="left:890.52px;top:276.00px;font-size:27px;line-height:27px;color:#000;z-index:5;transform:scaleX(0.9914);-webkit-text-stroke:0.3px #000;paint-order:stroke fill;">Месяц</div>
<div class="t" style="left:1019.98px;top:276.00px;font-size:27px;line-height:27px;color:#000;z-index:5;transform:scaleX(1.0123);-webkit-text-stroke:0.3px #000;paint-order:stroke fill;">Квартал</div>
<div class="t" style="left:1171.15px;top:276.00px;font-size:27px;line-height:27px;color:#000;z-index:5;transform:scaleX(1.0488);-webkit-text-stroke:0.3px #000;paint-order:stroke fill;">Год</div>
<div class="t" style="left:1344.59px;top:276.00px;font-size:27px;line-height:27px;color:#000;z-index:5;transform:scaleX(0.9574);-webkit-text-stroke:0.3px #000;paint-order:stroke fill;">1 авг 2025 — 31 янв 2026</div>
<div class="t" style="left:1729.25px;top:276.00px;font-size:27px;line-height:27px;color:#000;z-index:5;transform:scaleX(0.9678);-webkit-text-stroke:0.3px #000;paint-order:stroke fill;">Детализация: по месяцам</div>
<div class="t" style="left:2141.00px;top:276.00px;font-size:27px;line-height:27px;color:#000;z-index:5;transform:scaleX(0.9790);-webkit-text-stroke:0.3px #000;paint-order:stroke fill;">Данные: без роботов</div>
<div class="t" style="left:2471.70px;top:282.00px;font-size:17px;line-height:17px;color:#c4c4c4;z-index:5;">?</div>
<div class="t" style="left:497.78px;top:376.00px;font-size:27px;line-height:27px;color:#000;z-index:5;transform:scaleX(0.9725);-webkit-text-stroke:0.3px #000;paint-order:stroke fill;">Сегмент: 1 условие</div>
<div class="t" style="left:911.52px;top:376.00px;font-size:27px;line-height:27px;color:#000;z-index:5;transform:scaleX(0.9774);-webkit-text-stroke:0.3px #000;paint-order:stroke fill;">Сравнить сегменты</div>
<div class="t" style="left:1247.02px;top:376.00px;font-size:27px;line-height:27px;color:#808080;z-index:5;transform:scaleX(0.9876);">Выборка: 100%</div>
<div class="t" style="left:1537.00px;top:376.00px;font-size:27px;line-height:27px;color:#000;z-index:5;transform:scaleX(0.9755);-webkit-text-stroke:0.3px #000;paint-order:stroke fill;">Атрибуция: Последний значимый переход</div>
<div class="t" style="left:2125.70px;top:384.00px;font-size:17px;line-height:17px;color:#c4c4c4;z-index:5;">?</div>
<div class="t" style="left:448.00px;top:488.00px;font-size:27px;line-height:27px;color:#999;z-index:5;transform:scaleX(0.9493);-webkit-text-stroke:0.4px #999;paint-order:stroke fill;">Визиты, в которых</div>
<div class="t" style="left:705.11px;top:490.00px;font-size:27px;line-height:27px;color:#000;z-index:5;transform:scaleX(0.9467);-webkit-text-stroke:0.4px #000;paint-order:stroke fill;">Поведение • Роботность: Только люди</div>
<div class="t" style="left:1300.75px;top:488.00px;font-size:27px;line-height:27px;color:#999;z-index:5;transform:scaleX(0.9407);-webkit-text-stroke:0.4px #999;paint-order:stroke fill;">для людей, у которых</div>
<div class="t" style="left:446.54px;top:598.00px;font-size:38px;line-height:38px;color:#000;z-index:5;transform:scaleX(0.9870);-webkit-text-stroke:0.5px #000;paint-order:stroke fill;">Визиты</div>
<div class="t" style="left:987.99px;top:604.00px;font-size:27px;line-height:27px;color:#000;z-index:5;transform:scaleX(1.0136);-webkit-text-stroke:0.3px #000;paint-order:stroke fill;">6/6</div>
<div class="t" style="left:2528.75px;top:600.00px;font-size:27px;line-height:27px;color:#000;z-index:5;-webkit-text-stroke:0.3px #000;paint-order:stroke fill;">Скрыть график</div>
<div class="t" style="left:476.77px;top:706.00px;font-size:24px;line-height:24px;color:#000;z-index:5;transform:scaleX(0.9818);">60 000</div>
<div class="t" style="left:477.75px;top:822.00px;font-size:24px;line-height:24px;color:#000;z-index:5;transform:scaleX(0.9684);">50 000</div>
<div class="t" style="left:477.75px;top:934.00px;font-size:24px;line-height:24px;color:#000;z-index:5;transform:scaleX(0.9684);">40 000</div>
<div class="t" style="left:477.75px;top:1048.00px;font-size:24px;line-height:24px;color:#000;z-index:5;transform:scaleX(0.9684);">30 000</div>
<div class="t" style="left:476.77px;top:1162.00px;font-size:24px;line-height:24px;color:#000;z-index:5;transform:scaleX(0.9818);">20 000</div>
<div class="t" style="left:478.95px;top:1274.00px;font-size:24px;line-height:24px;color:#000;z-index:5;transform:scaleX(0.9520);">10 000</div>
<div class="t" style="left:535.50px;top:1384.00px;font-size:24px;line-height:24px;color:#000;z-index:5;">0</div>
<div class="t" style="left:544.24px;top:1417.00px;font-size:24px;line-height:24px;color:#000;z-index:5;">Авг 25</div>
<div class="t" style="left:864.53px;top:1417.00px;font-size:24px;line-height:24px;color:#000;z-index:5;">Сен 25</div>
<div class="t" style="left:1190.28px;top:1417.00px;font-size:24px;line-height:24px;color:#000;z-index:5;">Окт 25</div>
<div class="t" style="left:1512.65px;top:1417.00px;font-size:24px;line-height:24px;color:#000;z-index:5;">Ноя 25</div>
<div class="t" style="left:1838.94px;top:1417.00px;font-size:24px;line-height:24px;color:#000;z-index:5;">Дек 25</div>
<div class="t" style="left:2162.82px;top:1417.00px;font-size:24px;line-height:24px;color:#000;z-index:5;">Янв 26</div>
<div class="t" style="left:1221.91px;top:1391.00px;font-size:22px;line-height:22px;color:#fff;z-index:7;font-weight:700;transform:scaleX(0.9364);">н</div>
<div class="t" style="left:1869.91px;top:1391.00px;font-size:22px;line-height:22px;color:#fff;z-index:7;font-weight:700;transform:scaleX(0.9364);">н</div>
<div class="t" style="left:1534.01px;top:1391.00px;font-size:22px;line-height:22px;color:#fff;z-index:9;font-weight:700;transform:scaleX(0.9364);">н</div>
<div class="t" style="left:2181.66px;top:1391.00px;font-size:22px;line-height:22px;color:#fff;z-index:9;font-weight:700;transform:scaleX(0.9364);">н</div>
<div class="t" style="left:2368.22px;top:967.00px;font-size:27px;line-height:27px;color:#000;z-index:5;transform:scaleX(0.9914);-webkit-text-stroke:0.3px #000;paint-order:stroke fill;">Переходы из поисковых систем</div>
<div class="t" style="left:2368.24px;top:1019.00px;font-size:27px;line-height:27px;color:#000;z-index:5;transform:scaleX(0.9822);-webkit-text-stroke:0.3px #000;paint-order:stroke fill;">Прямые заходы</div>
<div class="t" style="left:2368.25px;top:1071.00px;font-size:27px;line-height:27px;color:#000;z-index:5;transform:scaleX(0.9766);-webkit-text-stroke:0.3px #000;paint-order:stroke fill;">Переходы по ссылкам на сайтах</div>
<div class="t" style="left:2368.23px;top:1123.00px;font-size:27px;line-height:27px;color:#000;z-index:5;transform:scaleX(0.9829);-webkit-text-stroke:0.3px #000;paint-order:stroke fill;">Внутренние переходы</div>
<div class="t" style="left:2368.25px;top:1175.00px;font-size:27px;line-height:27px;color:#000;z-index:5;transform:scaleX(0.9754);-webkit-text-stroke:0.3px #000;paint-order:stroke fill;">Не определено</div>
<script>(function(){var w=window.innerWidth||document.documentElement.clientWidth;if(w&&Math.abs(w-2880)>1){document.body.style.transform="scale("+(w/2880)+")";}})();</script>
</body></html>
